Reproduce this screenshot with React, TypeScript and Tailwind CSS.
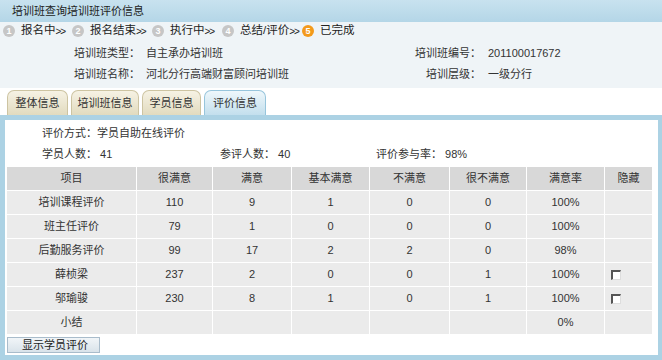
import React from 'react';

// Training class evaluation info page
const steps = [
  { n: 1, label: '报名中', w: 'w-[69px]', arrow: true },
  { n: 2, label: '报名结束', w: 'w-[80px]', arrow: true },
  { n: 3, label: '执行中', w: 'w-[70px]', arrow: true },
  { n: 4, label: '总结/评价', w: 'w-[80px]', arrow: true },
  { n: 5, label: '已完成', w: 'w-[60px]', current: true },
];

const tabs = ['整体信息', '培训班信息', '学员信息', '评价信息'];

const colWidths = ['w-[130px]', 'w-[76px]', 'w-[79px]', 'w-[78px]', 'w-[80px]', 'w-[77px]', 'w-[78px]', 'w-[47px]'];
const headers = ['项目', '很满意', '满意', '基本满意', '不满意', '很不满意', '满意率', '隐藏'];

const rows: { cells: string[]; check?: boolean }[] = [
  { cells: ['培训课程评价', '110', '9', '1', '0', '0', '100%'] },
  { cells: ['班主任评价', '79', '1', '0', '0', '0', '100%'] },
  { cells: ['后勤服务评价', '99', '17', '2', '2', '0', '98%'] },
  { cells: ['薛桢梁', '237', '2', '0', '0', '1', '100%'], check: true },
  { cells: ['邬瑜骏', '230', '8', '1', '0', '1', '100%'], check: true },
  { cells: ['小结', '', '', '', '', '', '0%'] },
];

function Checkbox() {
  return (
    <span className="ml-[6px] block w-[10px] h-[10px] bg-white border-t-[2px] border-l-[2px] border-t-[#555] border-l-[#555] border-b border-r border-b-[#ddd] border-r-[#ddd]" />
  );
}

export default function App() {
  return (
    <div
      className="w-[662px] h-[360px] bg-white overflow-hidden text-[#222]"
      style={{ fontFamily: '"Liberation Sans", "Noto Sans CJK SC", sans-serif' }}
    >
      {/* title bar */}
      <div className="h-[22px] bg-gradient-to-b from-[#c8e2ef] to-[#b4d6e7] flex items-center pl-[12px] text-[11px] text-[#222]">
        培训班查询培训班评价信息
      </div>

      {/* steps + basic info */}
      <div className="h-[66px] bg-[#eff4f7]">
        <div className="h-[18px] flex items-center pl-[3px] text-[11.5px] whitespace-nowrap">
          {steps.map((s) => (
            <div key={s.n} className={`${s.w} shrink-0 flex items-center`}>
              <span
                className={`w-[12px] h-[12px] shrink-0 rounded-full flex items-center justify-center text-[9px] font-bold text-white leading-none ${
                  s.current ? 'bg-[#f39a1c]' : 'bg-[#c6c6c6]'
                }`}
              >
                {s.n}
              </span>
              <span className="ml-[6px]">{s.label}</span>
              {s.arrow && <span className="text-[10px] tracking-[-1px]">&gt;&gt;</span>}
            </div>
          ))}
        </div>
        <div className="text-[11px] text-[#333] pt-[3px]">
          <div className="h-[21px] flex items-center">
            <span className="w-[140px] text-right">培训班类型：</span>
            <span className="ml-[6px] w-[261px]">自主承办培训班</span>
            <span className="w-[74px] text-right">培训班编号：</span>
            <span className="ml-[7px]">201100017672</span>
          </div>
          <div className="h-[21px] flex items-center">
            <span className="w-[140px] text-right">培训班名称：</span>
            <span className="ml-[6px] w-[261px]">河北分行高端财富顾问培训班</span>
            <span className="w-[74px] text-right">培训层级：</span>
            <span className="ml-[7px]">一级分行</span>
          </div>
        </div>
      </div>

      {/* tabs */}
      <div className="h-[27px] pt-[2px] flex items-end pl-[7px] gap-[3px] text-[11px]">
        {tabs.map((t, i) =>
          i === 3 ? (
            <div
              key={t}
              className="h-[25px] w-[62px] flex items-center justify-center rounded-t-[7px] border border-b-0 border-[#97c5dc] bg-gradient-to-b from-[#eef7fb] to-[#c3dfed] text-[#333]"
            >
              {t}
            </div>
          ) : (
            <div
              key={t}
              className={`h-[25px] flex items-center justify-center rounded-t-[7px] border border-b-0 border-[#cdc4a2] bg-gradient-to-b from-[#f6f2e4] to-[#e2dbbf] text-[#333] ${
                i === 0 ? 'w-[61px]' : i === 1 ? 'w-[68px]' : 'w-[59px]'
              }`}
            >
              {t}
            </div>
          )
        )}
      </div>

      {/* panel */}
      <div className="h-[245px] border-t-[5px] border-l-[5px] border-r-[4px] border-b-[5px] border-[#acd2e4] bg-white pl-[2px]">
        <div className="mt-[3px] h-[20px] flex items-center pl-[35px] text-[11px] text-[#333]">
          评价方式：学员自助在线评价
        </div>
        <div className="h-[22px] flex items-center pl-[35px] text-[11px] text-[#333]">
          <span className="w-[178px]">学员人数： 41</span>
          <span className="w-[156px]">参评人数： 40</span>
          <span>评价参与率： 98%</span>
        </div>

        <div className="mt-[2px] w-[645px] text-[11px] text-[#333]">
          <div className="flex h-[24px] bg-[#d8d8d8]">
            {headers.map((h, i) => (
              <div
                key={h}
                className={`${colWidths[i]} h-full flex items-center justify-center border-r border-b border-white last:border-r-0`}
              >
                {h}
              </div>
            ))}
          </div>
          {rows.map((r) => (
            <div key={r.cells[0]} className="flex h-[24px] bg-[#ebebeb]">
              {r.cells.map((c, i) => (
                <div
                  key={i}
                  className={`${colWidths[i]} h-full flex items-center justify-center border-r border-b border-white`}
                >
                  {c}
                </div>
              ))}
              <div className={`${colWidths[7]} h-full flex items-center border-b border-white`}>
                {r.check && <Checkbox />}
              </div>
            </div>
          ))}
        </div>

        <button className="mt-[2px] h-[16px] w-[93px] flex items-center pl-[14px] text-[11px] text-[#222] border border-[#a9bccb] bg-gradient-to-b from-[#f1f5f8] to-[#d9e3ea]">
          显示学员评价
        </button>
      </div>
    </div>
  );
}
